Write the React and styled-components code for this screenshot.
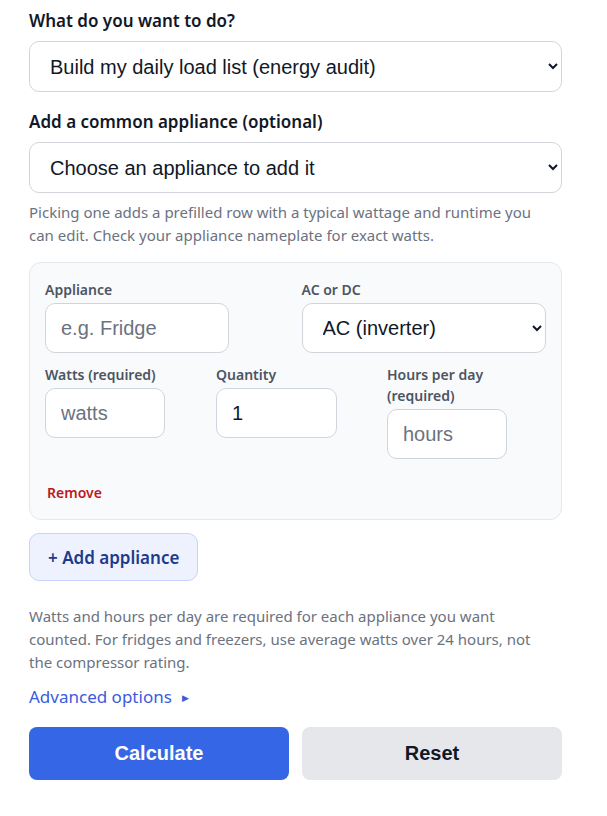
import React from "react";
import styled, { createGlobalStyle } from "styled-components";

const Global = createGlobalStyle`
  html, body { margin: 0; padding: 0; background: #fff; }
  body { font-family: "Noto Sans", "Open Sans", sans-serif; color: #111827; }
  * { box-sizing: border-box; }
`;

const Page = styled.div`
  padding: 9px 45px 36px 29px;
  width: 607px;
  display: flex;
  flex-direction: column;
`;

const Heading = styled.label`
  display: block;
  font-size: 17px;
  font-weight: 600;
  line-height: 24px;
  color: #111827;
  margin-bottom: 8px;
`;

const BigSelect = styled.select`
  width: 100%;
  height: 51px;
  border: 1px solid #d1d5db;
  border-radius: 10px;
  background: #fff;
  font-family: "Liberation Sans", Arial, sans-serif;
  font-size: 20px;
  color: #111827;
  padding: 0 10px 0 16px;
  margin-bottom: ${(p) => p.$mb || 0}px;
`;

const Help = styled.p`
  margin: 0;
  max-width: 520px;
  font-size: 15px;
  line-height: 23px;
  color: #6b7280;
`;

const Card = styled.div`
  margin-top: 15px;
  background: #f9fafb;
  border: 1px solid #e5e7eb;
  border-radius: 12px;
  padding: 16px 15px 16px 15px;
  display: flex;
  flex-direction: column;
`;

const Grid = styled.div`
  display: grid;
  grid-template-columns: repeat(${(p) => p.$cols}, 1fr);
  column-gap: 12px;
  align-items: start;
  margin-bottom: ${(p) => p.$mb || 0}px;
`;

const Field = styled.div`
  display: flex;
  flex-direction: column;
  align-items: flex-start;
`;

const FieldLabel = styled.label`
  font-size: 14px;
  font-weight: 600;
  line-height: 21px;
  color: #4b5563;
  margin-bottom: 3px;
`;

const Input = styled.input`
  width: ${(p) => p.$w}px;
  height: 50px;
  border: 1px solid #d1d5db;
  border-radius: 10px;
  background: #fff;
  font-family: "Liberation Sans", Arial, sans-serif;
  font-size: 20px;
  color: #111827;
  padding: 0 15px;
  &::placeholder { color: #6b7280; }
`;

const FieldSelect = styled.select`
  width: 100%;
  height: 50px;
  border: 1px solid #d1d5db;
  border-radius: 10px;
  background: #fff;
  font-family: "Liberation Sans", Arial, sans-serif;
  font-size: 20px;
  color: #111827;
  padding: 0 10px 0 16px;
`;

const RemoveBtn = styled.button`
  align-self: flex-start;
  margin-top: 24px;
  background: none;
  border: none;
  padding: 0 2px;
  font-family: inherit;
  font-size: 14px;
  font-weight: 600;
  line-height: 20px;
  color: #b91c1c;
  cursor: pointer;
`;

const AddBtn = styled.button`
  align-self: flex-start;
  margin-top: 13px;
  height: 48px;
  padding: 0 18px;
  background: #eef2ff;
  border: 1px solid #c7d2fe;
  border-radius: 10px;
  font-family: "Noto Sans", sans-serif;
  font-size: 17px;
  font-weight: 600;
  color: #1e3a8a;
  cursor: pointer;
`;

const Note = styled(Help)`
  margin-top: 24px;
`;

const Advanced = styled.button`
  align-self: flex-start;
  margin-top: 11px;
  background: none;
  border: none;
  padding: 0;
  font-family: "Noto Sans", sans-serif;
  font-size: 17px;
  line-height: 24px;
  color: #3b5bdb;
  display: flex;
  align-items: center;
  gap: 10px;
  cursor: pointer;
`;

const Tri = styled.span`
  font-size: 9px;
  line-height: 1;
`;

const Actions = styled.div`
  margin-top: 18px;
  display: grid;
  grid-template-columns: 1fr 1fr;
  gap: 13px;
`;

const ActionBtn = styled.button`
  height: 53px;
  border: none;
  border-radius: 8px;
  font-family: "Liberation Sans", Arial, sans-serif;
  font-size: 20px;
  font-weight: 700;
  background: ${(p) => (p.$primary ? "#3566e5" : "#e5e7eb")};
  color: ${(p) => (p.$primary ? "#fff" : "#111827")};
  cursor: pointer;
`;

export default function App() {
  return (
    <>
      <Global />
      <Page>
        <Heading>What do you want to do?</Heading>
        <BigSelect $mb={18} defaultValue="audit">
          <option value="audit">Build my daily load list (energy audit)</option>
        </BigSelect>
        <Heading>Add a common appliance (optional)</Heading>
        <BigSelect $mb={8} defaultValue="">
          <option value="">Choose an appliance to add it</option>
        </BigSelect>
        <Help>
          Picking one adds a prefilled row with a typical wattage and runtime you
          can edit. Check your appliance nameplate for exact watts.
        </Help>
        <Card>
          <Grid $cols={2} $mb={11}>
            <Field>
              <FieldLabel>Appliance</FieldLabel>
              <Input $w={184} placeholder="e.g. Fridge" />
            </Field>
            <Field>
              <FieldLabel>AC or DC</FieldLabel>
              <FieldSelect defaultValue="ac">
                <option value="ac">AC (inverter)</option>
              </FieldSelect>
            </Field>
          </Grid>
          <Grid $cols={3}>
            <Field>
              <FieldLabel>Watts (required)</FieldLabel>
              <Input $w={120} placeholder="watts" />
            </Field>
            <Field>
              <FieldLabel>Quantity</FieldLabel>
              <Input $w={121} defaultValue="1" />
            </Field>
            <Field>
              <FieldLabel>
                Hours per day
                <br />
                (required)
              </FieldLabel>
              <Input $w={120} placeholder="hours" />
            </Field>
          </Grid>
          <RemoveBtn>Remove</RemoveBtn>
        </Card>
        <AddBtn>+ Add appliance</AddBtn>
        <Note>
          Watts and hours per day are required for each appliance you want
          counted. For fridges and freezers, use average watts over 24 hours, not
          the compressor rating.
        </Note>
        <Advanced>
          Advanced options <Tri>▶</Tri>
        </Advanced>
        <Actions>
          <ActionBtn $primary>Calculate</ActionBtn>
          <ActionBtn>Reset</ActionBtn>
        </Actions>
      </Page>
    </>
  );
}
